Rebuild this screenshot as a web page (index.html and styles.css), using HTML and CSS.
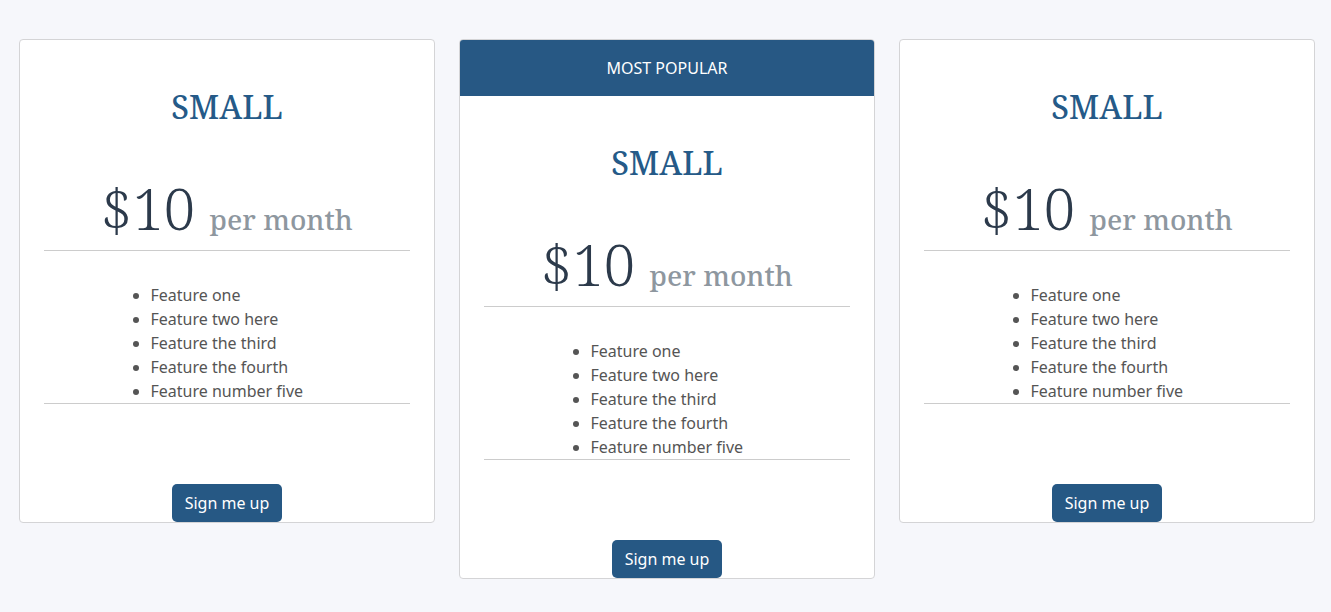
FILE: index.html
```html
<!DOCTYPE html>
<html lang="en">
<head>
<meta charset="utf-8">
<title>Pricing</title>
<link rel="stylesheet" href="styles.css">
</head>
<body>
<main class="pricing">
  <section class="card">
    <div class="card-body">
      <h2 class="plan">SMALL</h2>
      <div class="price"><span class="amount">$10</span> <span class="period">per month</span></div>
      <div class="features">
        <ul>
          <li>Feature one</li>
          <li>Feature two here</li>
          <li>Feature the third</li>
          <li>Feature the fourth</li>
          <li>Feature number five</li>
        </ul>
      </div>
      <button class="btn" type="button">Sign me up</button>
    </div>
  </section>
  <section class="card">
    <div class="card-header">MOST POPULAR</div>
    <div class="card-body">
      <h2 class="plan">SMALL</h2>
      <div class="price"><span class="amount">$10</span> <span class="period">per month</span></div>
      <div class="features">
        <ul>
          <li>Feature one</li>
          <li>Feature two here</li>
          <li>Feature the third</li>
          <li>Feature the fourth</li>
          <li>Feature number five</li>
        </ul>
      </div>
      <button class="btn" type="button">Sign me up</button>
    </div>
  </section>
  <section class="card">
    <div class="card-body">
      <h2 class="plan">SMALL</h2>
      <div class="price"><span class="amount">$10</span> <span class="period">per month</span></div>
      <div class="features">
        <ul>
          <li>Feature one</li>
          <li>Feature two here</li>
          <li>Feature the third</li>
          <li>Feature the fourth</li>
          <li>Feature number five</li>
        </ul>
      </div>
      <button class="btn" type="button">Sign me up</button>
    </div>
  </section>
</main>
</body>
</html>
```
FILE: styles.css
```css
* { box-sizing: border-box; }

html, body {
  margin: 0;
  padding: 0;
  background: #f6f7fb;
}

body {
  font-family: "Noto Sans", "Open Sans", sans-serif;
  font-size: 16px;
  line-height: 24px;
  color: #555555;
}

.pricing {
  display: grid;
  grid-template-columns: repeat(3, 416px);
  column-gap: 24px;
  align-items: start;
  padding: 39px 16px 0 19px;
}

.card {
  display: flex;
  flex-direction: column;
  background: #ffffff;
  border: 1px solid #d4d4d6;
  border-radius: 4px;
  overflow: hidden;
}

.card-header {
  height: 56px;
  display: flex;
  align-items: center;
  justify-content: center;
  background: #275884;
  color: #ffffff;
  font-size: 16px;
}

.card-body {
  display: flex;
  flex-direction: column;
  padding: 0 24px;
  text-align: center;
}

.plan {
  margin: 47px 0 0;
  font-family: "Noto Serif", "DejaVu Serif", serif;
  font-weight: 500;
  font-size: 32px;
  line-height: 40px;
  color: #255a88;
}

.price {
  margin-top: 49px;
  padding-bottom: 10px;
  border-bottom: 1px solid #cccccc;
  font-family: "Noto Serif", "DejaVu Serif", serif;
  font-size: 56px;
  line-height: 64px;
}

.amount {
  font-weight: 300;
  color: #2c3a4b;
}

.period {
  font-size: 28px;
  font-weight: 500;
  line-height: 1;
  color: #8e979f;
}

.features {
  margin-top: 32px;
  border-bottom: 1px solid #cccccc;
}

.features ul {
  width: 183px;
  margin: 0 auto;
  padding: 0 0 0 15px;
  text-align: left;
}

.features li {
  line-height: 24px;
}

.btn {
  align-self: center;
  margin-top: 80px;
  padding: 6px 13px;
  border: 0;
  border-radius: 5px;
  background: #265884;
  color: #ffffff;
  font-family: "Noto Sans", "Open Sans", sans-serif;
  font-size: 16px;
  line-height: 26px;
}
```
